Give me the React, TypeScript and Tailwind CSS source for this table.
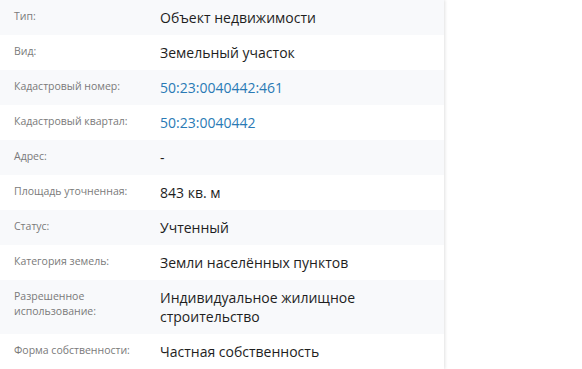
import React from 'react';

type Row = { label: string; value: string; link?: boolean };

const rows: Row[] = [
  { label: 'Тип:', value: 'Объект недвижимости' },
  { label: 'Вид:', value: 'Земельный участок' },
  { label: 'Кадастровый номер:', value: '50:23:0040442:461', link: true },
  { label: 'Кадастровый квартал:', value: '50:23:0040442', link: true },
  { label: 'Адрес:', value: '-' },
  { label: 'Площадь уточненная:', value: '843 кв. м' },
  { label: 'Статус:', value: 'Учтенный' },
  { label: 'Категория земель:', value: 'Земли населённых пунктов' },
  { label: 'Разрешенное использование:', value: 'Индивидуальное жилищное строительство' },
  { label: 'Форма собственности:', value: 'Частная собственность' },
];

const App: React.FC = () => {
  return (
    <div
      className="w-[582px] h-[369px] overflow-hidden bg-white"
      style={{ fontFamily: '"Open Sans", "Noto Sans", sans-serif' }}
    >
      <div className="w-[444px] shadow-[1px_0_3px_rgba(0,0,0,0.12)]">
        {rows.map((row, i) => (
          <div
            key={i}
            className={`flex items-start min-h-[35px] pl-[14px] pr-4 py-[8px] ${i % 2 === 0 ? 'bg-[#f8f9fb]' : 'bg-white'}`}
          >
            <div className="w-[146px] shrink-0 pr-3 pt-[1px] text-[10.5px] leading-[15px] text-[#7a7a7a]">
              {row.label}
            </div>
            <div
              className={`flex-1 pr-10 text-[14px] leading-[19px] ${row.link ? 'text-[#2a7ab5]' : 'text-[#1e1e1e]'}`}
            >
              {row.value}
            </div>
          </div>
        ))}
      </div>
    </div>
  );
};

export default App;
